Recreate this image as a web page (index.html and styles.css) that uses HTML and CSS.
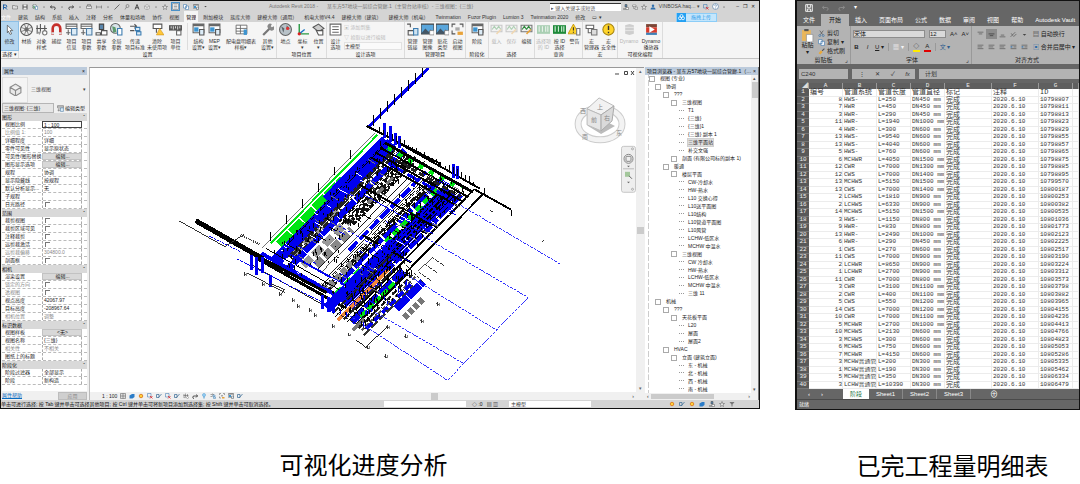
FILE: index.html
```
<!DOCTYPE html>
<html lang="zh-CN">
<head>
    <meta charset="UTF-8">
    <meta name="viewport" content="width=device-width, initial-scale=1.0">
    <title>可视化进度分析</title>
    <link rel="stylesheet" href="styles.css">
</head>
<body>
    <main class="figures">
        <figure class="figure">
            <div class="revit">
                <header class="revit-title">
                    <div class="quick-access" id="quick-access"></div>
                    <span class="doc-title">Autodesk Revit 2018 -</span>
                    <span class="doc-name">某东方57地块一层综合管廊.1（主管台站审核）- 三维视图：{三维}</span>
                    <input class="title-search" type="text" aria-label="搜索" value="▸ 键入关键字或短语">
                    <div class="title-tools" id="title-tools"></div>
                    <span class="window-buttons"><span>–</span><span>❐</span><span>✕</span></span>
                </header>

                <nav class="revit-tabs" id="revit-tabs"></nav>
                <div class="ribbon" id="ribbon"></div>
                <div class="options-bar"></div>

                <div class="workspace">
                    <aside class="properties">
                        <div class="panel-head"><span>属性</span><span>×</span></div>
                        <div class="type-picker">
                            <div class="type-thumb" id="type-thumb"></div>
                            <span>三维视图</span>
                            <span class="caret">▾</span>
                        </div>
                        <div class="type-row">
                            <select aria-label="类型"><option>三维视图: {三维}</option></select>
                            <button class="edit-type" id="edit-type"></button>
                        </div>
                        <div class="prop-grid" id="prop-grid"></div>
                        <div class="prop-foot">
                            <a href="#">属性帮助</a>
                            <button disabled>应用</button>
                        </div>
                    </aside>

                    <section class="view">
                        <div class="view-body">
                            <svg class="model" id="model" viewBox="89 69 547 325" role="img" aria-label="三维管线模型"></svg>
                            <div class="scroll-y"><span>▴</span><i></i><span>▾</span></div>
                        </div>
                        <div class="view-bar">
                            <span class="view-scale">1 : 100</span>
                            <div class="view-icons" id="view-icons"></div>
                            <div class="scroll-x"><i></i><span>›</span></div>
                        </div>
                    </section>

                    <aside class="browser">
                        <div class="panel-head"><span>项目浏览器 - 某东方57地块一层综合管廊.1（…</span><span>×</span></div>
                        <div class="browser-body">
                            <div class="tree" id="tree"></div>
                            <div class="tree-scroll"><span>▴</span><i></i><span class="end">▾</span></div>
                        </div>
                        <div class="tree-hscroll"><span>‹</span><i></i><span>›</span></div>
                    </aside>
                </div>

                <footer class="revit-status">
                    <span class="status-text">单击可进行选择; 按 Tab 键并单击可选择其他项目; 按 Ctrl 键并单击可将新项目添加到选择集; 按 Shift 键并单击可取消选择。</span>
                    <select aria-label="工作集"><option></option></select>
                    <span class="status-mid">◇ :0 &nbsp; ▤ ▥</span>
                    <select aria-label="设计选项"><option>主模型</option></select>
                    <div class="status-icons" id="status-icons"></div>
                </footer>
            </div>
            <figcaption class="caption caption-left">可视化进度分析</figcaption>
        </figure>

        <figure class="figure">
            <div class="excel">
                <header class="excel-title" id="excel-title"></header>
                <nav class="excel-tabs">
                    <button>文件</button>
                    <button class="active">开始</button>
                    <button>插入</button>
                    <button>页面布局</button>
                    <button>公式</button>
                    <button>数据</button>
                    <button>审阅</button>
                    <button>视图</button>
                    <button>帮助</button>
                    <button>Autodesk Vault</button>
                </nav>

                <div class="excel-ribbon">
                    <div class="group group-clip">
                        <div class="group-body">
                            <button class="paste" id="paste"></button>
                            <div class="clip-list" id="clip-list"></div>
                        </div>
                        <div class="group-name">剪贴板<span>⌟</span></div>
                    </div>
                    <div class="group group-font">
                        <div class="font-rows">
                            <div class="font-row">
                                <select class="font-name" aria-label="字体"><option>宋体</option></select>
                                <select class="font-size" aria-label="字号"><option>12</option></select>
                                <button>A˄</button>
                                <button>A˅</button>
                            </div>
                            <div class="font-row">
                                <button><b>B</b></button>
                                <button><i>I</i></button>
                                <button><u>U</u> ▾</button>
                                <span class="rule"></span>
                                <button class="borders">▦ ▾</button>
                                <span class="rule"></span>
                                <button class="fill">◇</button>
                                <button class="ink">A</button>
                                <span class="rule"></span>
                                <button class="phonetic">文 ▾</button>
                            </div>
                        </div>
                        <div class="group-name">字体<span>⌟</span></div>
                    </div>
                    <div class="group group-align">
                        <div class="align-cols">
                            <div class="align-icons" id="align-icons"></div>
                            <div class="align-text">
                                <button>▤ 自动换行</button>
                                <button><em>▣</em> 合并后居中 ▾</button>
                            </div>
                        </div>
                        <div class="group-name">对齐方式</div>
                    </div>
                </div>

                <div class="formula-bar">
                    <select class="name-box" aria-label="名称框"><option>C240</option></select>
                    <div class="formula-tools"><span>⋮</span><span>✕</span><span>✓</span><i>fx</i></div>
                    <input type="text" aria-label="编辑栏" value="计划">
                </div>

                <table class="sheet">
                    <colgroup>
                        <col class="col-head"><col class="col-s"><col class="col-s"><col class="col-s"><col class="col-s">
                        <col class="col-l"><col class="col-l"><col class="col-s"><col>
                    </colgroup>
                    <thead>
                        <tr><th class="corner">◢</th><th>A</th><th>B</th><th>C</th><th>D</th><th>E</th><th>F</th><th>G</th><th></th></tr>
                    </thead>
                    <tbody id="sheet-rows"></tbody>
                </table>

                <div class="sheet-tabs">
                    <span class="arrow">‹</span><span class="arrow">›</span>
                    <button class="active">阶段</button>
                    <button>Sheet1</button>
                    <button>Sheet2</button>
                    <button>Sheet3</button>
                    <button class="add">⊕</button>
                </div>
                <footer class="excel-status">就绪</footer>
            </div>
            <figcaption class="caption caption-right">已完工程量明细表</figcaption>
        </figure>
    </main>
    <script src="script.js"></script>
</body>
</html>
```

FILE: styles.css
```
:root {
    --ui: "Liberation Sans", "Noto Sans CJK SC", sans-serif;
    --mono: "Liberation Mono", "Noto Sans CJK SC", monospace;
    --chrome: #d4d4d4;
    --panel: #f0f0f0;
    --ribbon: #f5f5f5;
    --head: #bccbdc;
    --dark: #666666;
    --xl: #b3b3b3;
}

* {
    margin: 0;
    padding: 0;
    box-sizing: border-box;
}

body {
    background: #fff;
    font-family: var(--ui);
    font-size: 5px;
    line-height: 7px;
    color: #222;
    overflow-x: hidden;
}

button,
input,
select {
    font: inherit;
    color: inherit;
    background: none;
    border: none;
    border-radius: 0;
    appearance: none;
    white-space: nowrap;
}

svg {
    display: block;
}

.figures {
    display: grid;
    grid-template-columns: 760fr 285fr;
    column-gap: 35px;
    align-items: start;
}

.figure {
    min-width: 0;
}

.caption {
    margin-top: 37px;
    font-family: "Noto Sans CJK SC", sans-serif;
    font-size: 24px;
    line-height: 36px;
    text-align: center;
    color: #000;
    white-space: nowrap;
}

.caption-left {
    padding-right: 33px;
}

.caption-right {
    padding-left: 30px;
}

/* ---------- Revit window ---------- */

.revit {
    border: 1px solid #111;
    background: var(--panel);
    overflow: hidden;
}

.revit-title {
    display: flex;
    align-items: center;
    height: 11px;
    background: var(--chrome);
    white-space: nowrap;
}

.quick-access {
    display: flex;
    align-items: center;
    gap: 4px;
    width: 268px;
    padding-left: 1px;
}

.quick-access .boxed {
    background: #c5e0f5;
    outline: 1px solid #4a90c8;
}

.doc-title {
    width: 58px;
    color: #777;
}

.doc-name {
    flex: 1;
    color: #777;
    overflow: hidden;
}

.title-search {
    width: 71px;
    height: 8px;
    padding: 0 1px;
    background: #fff;
    border-top: 1px solid #333;
    color: #555;
}

.title-tools {
    display: flex;
    align-items: center;
    gap: 3px;
    padding-left: 2px;
    color: #444;
}

.window-buttons {
    display: flex;
    gap: 4px;
    padding: 0 4px 0 10px;
    color: #222;
}

.revit-tabs {
    display: flex;
    align-items: center;
    gap: 7px;
    height: 10px;
    background: var(--chrome);
}

.revit-tabs button {
    height: 9px;
    color: #333;
}

.revit-tabs .file {
    color: #fff;
}

.revit-tabs .active {
    background: var(--ribbon);
    outline: 2px solid var(--ribbon);
    color: #000;
}

.revit-tabs .cloud {
    display: flex;
    align-items: center;
    margin: 0 42px 0 auto;
    background: #c4e6fc;
    border: 1px solid #8ccdf7;
    color: #2f9bea;
    padding-right: 5px;
    gap: 5px;
}

.ribbon {
    display: flex;
    height: 37px;
    background: var(--ribbon);
    border-bottom: 1px solid #c4c4c4;
    line-height: 6px;
}

.ribbon-panel {
    display: flex;
    flex-direction: column;
    justify-content: space-between;
    border-right: 1px solid #dcdcdc;
}

.ribbon-panel .tools {
    display: flex;
}

.panel-name {
    text-align: center;
    line-height: 9px;
}

.tool {
    display: flex;
    flex-direction: column;
    align-items: center;
    width: 15px;
    height: 28px;
    padding-top: 1px;
    line-height: 6px;
    color: #333;
}

.tool svg {
    flex: none;
    margin-bottom: 2px;
}

.tool span {
    display: block;
}

.tool.mid {
    width: 17px;
}

.tool.wide {
    width: 22px;
}

.tool.extra {
    width: 36px;
}

.tool.on {
    background: #b6d7f0;
    outline: 1px solid #8cbfe6;
}

.tool.off {
    opacity: 0.35;
}

.tool-sep {
    width: 1px;
    margin: 1px 3px 0 4px;
    background: #dcdcdc;
}

.option-list {
    width: 60px;
    line-height: 10px;
    color: #bbb;
}

.option-list select {
    display: block;
    width: 58px;
    height: 8px;
    line-height: 7px;
    color: #333;
    background: #fafafa;
    border: 1px solid #e2e2e2;
}

.options-bar {
    height: 8px;
    background: #f2f2f2;
}

.workspace {
    display: flex;
}

.panel-head {
    display: flex;
    justify-content: space-between;
    height: 8px;
    padding: 0 2px;
    background: var(--head);
    line-height: 8px;
    white-space: nowrap;
    overflow: hidden;
    color: #111;
}

/* properties palette */

.properties {
    flex: 0 0 86px;
    display: flex;
    flex-direction: column;
    margin-right: 2px;
    padding-left: 1px;
    min-width: 0;
}

.type-picker {
    display: flex;
    align-items: center;
    gap: 3px;
    height: 28px;
    padding-top: 1px;
    color: #444;
}

.type-thumb {
    display: grid;
    place-items: center;
    width: 26px;
    height: 26px;
    border: 1px solid #ddd;
    background: #f4f4f4;
}

.type-picker .caret {
    margin: 0 1px 0 auto;
}

.type-row {
    display: flex;
    gap: 3px;
    height: 10px;
}

.type-row select {
    width: 52px;
    border: 1px solid #b5b5b5;
    background: #e6e6e6;
    padding-left: 1px;
}

.edit-type {
    display: flex;
    align-items: center;
    gap: 1px;
}

.prop-grid {
    flex: 1;
    background: #fff;
    white-space: nowrap;
}

.prop-group {
    display: flex;
    justify-content: space-between;
    align-items: center;
    height: 8px;
    padding-right: 2px;
    background: #d9d9d9;
}

.prop {
    display: grid;
    grid-template-columns: 38px 40px 1fr;
    grid-template-rows: 7px;
    height: 8px;
    padding-left: 2px;
    border-bottom: 1px dashed #bbb;
}

.prop > * {
    overflow: hidden;
    padding-left: 1px;
    min-width: 0;
    text-align: left;
}

.prop > :nth-child(2) {
    border-left: 1px dashed #aaa;
    border-right: 1px dashed #aaa;
}

.prop.grey {
    color: #888;
}

.prop > button:nth-child(2) {
    background: #d8d8d8;
    border: 1px solid #c2c2c2;
    text-align: center;
    line-height: 5px;
}

.prop > input:nth-child(2) {
    height: 7px;
    border: 1px solid #444;
    line-height: 5px;
}

.prop input[type="checkbox"] {
    display: block;
    width: 5px;
    height: 5px;
    margin: 1px;
    border: solid #777;
    border-width: 1px 0 0 1px;
}

.prop-foot {
    display: flex;
    justify-content: space-between;
    align-items: center;
    height: 9px;
    background: var(--panel);
}

.prop-foot a {
    color: #0a6cc0;
}

.prop-foot button {
    width: 29px;
    height: 8px;
    background: #cfcfcf;
    border: 1px solid #bdbdbd;
    color: #888;
}

/* drawing area */

.view {
    flex: 1;
    min-width: 0;
    border-top: 1px solid #999;
    border-left: 1px solid #bbb;
}

.view-body {
    display: flex;
    background: #fff;
}

.model {
    flex: 1;
    min-width: 0;
    height: auto;
}

.model text {
    font-family: var(--ui);
}

.scroll-y {
    display: flex;
    flex-direction: column;
    justify-content: space-between;
    align-items: center;
    width: 8px;
    background: var(--panel);
    color: #666;
}

.scroll-y i,
.scroll-x i {
    width: 7px;
    height: 7px;
    background: #cbcbcb;
}

.view-bar {
    display: flex;
    align-items: center;
    height: 8px;
    background: var(--panel);
}

.view-scale {
    width: 30px;
    padding-left: 12px;
    white-space: nowrap;
}

.view-icons {
    display: flex;
    gap: 3px;
}

.scroll-x {
    flex: 1;
    display: flex;
    align-items: center;
    justify-content: space-between;
    padding: 0 10px 0 188px;
}

/* project browser */

.browser {
    flex: 0 0 115px;
    display: flex;
    flex-direction: column;
    min-width: 0;
    padding-left: 1px;
    border-right: 1px solid #777;
}

.browser-body {
    flex: 1;
    display: flex;
    background: #fff;
}

.tree {
    flex: 1;
    display: grid;
    grid-auto-rows: 1fr;
    padding-left: 3px;
    min-width: 0;
    white-space: nowrap;
    overflow: hidden;
}

.node {
    display: flex;
    align-items: center;
    border-left: 1px dashed #ccc;
    line-height: 7px;
}

.node-1 { padding-left: 6px; }
.node-2 { padding-left: 14px; }
.node-3 { padding-left: 22px; }
.node-4 { padding-left: 30px; }

.node::before {
    content: "";
    width: 4px;
    height: 4px;
    margin-right: 5px;
    border: 1px solid #aaa;
}

.node-4::before {
    height: 1px;
    width: 5px;
    margin-right: 4px;
    border: 0;
    border-top: 1px dotted #999;
}

.node.selected span {
    background: #dedede;
    outline: 1px solid #d0d0d0;
}

.tree-scroll {
    display: flex;
    flex-direction: column;
    align-items: center;
    width: 7px;
    background: var(--panel);
    color: #555;
}

.tree-scroll i {
    width: 6px;
    height: 16px;
    background: #cbcbcb;
}

.tree-scroll .end {
    margin-top: auto;
}

.tree-hscroll {
    display: flex;
    height: 7px;
    align-items: center;
    gap: 2px;
    padding: 0 8px 0 2px;
}

.tree-hscroll i {
    width: 63px;
    height: 5px;
    background: #cbcbcb;
}

.tree-hscroll span:last-child {
    margin-left: auto;
}

.revit-status {
    display: flex;
    align-items: center;
    height: 8px;
    background: var(--chrome);
    white-space: nowrap;
    overflow: hidden;
    line-height: 6px;
    color: #111;
}

.status-text {
    width: 383px;
}

.revit-status select {
    width: 82px;
    height: 6px;
    background: #fff;
    line-height: 6px;
    color: #333;
    padding-left: 2px;
}

.status-mid {
    width: 43px;
    padding-left: 6px;
}

.status-icons {
    display: flex;
    gap: 4px;
    margin: 0 24px 0 auto;
}

/* ---------- Excel window ---------- */

.excel {
    border: 1px solid #111;
    border-left-width: 2px;
    background: var(--dark);
    color: #fff;
    font-size: 6px;
    overflow: hidden;
}

.excel-title {
    display: flex;
    align-items: center;
    gap: 9px;
    height: 13px;
    padding-left: 8px;
    color: #8f8f8f;
}

.excel-title span {
    color: #fff;
}

.excel-tabs {
    display: flex;
    height: 12px;
}

.excel-tabs button {
    padding: 0 6px;
    height: 12px;
}

.excel-tabs .active {
    background: var(--xl);
    color: #111;
    padding: 0 8px;
}

.excel-ribbon {
    display: flex;
    height: 38px;
    background: var(--xl);
    color: #222;
    overflow: hidden;
}

.group {
    display: flex;
    flex-direction: column;
    justify-content: space-between;
    border-right: 1px solid #999;
    padding-top: 3px;
}

.group-clip {
    width: 54px;
}

.group-font {
    width: 121px;
    padding-left: 2px;
}

.group-align {
    flex: 1;
    border: none;
    padding-left: 3px;
}

.group-body {
    display: flex;
    gap: 4px;
    padding-left: 4px;
}

.group-name {
    position: relative;
    text-align: center;
    line-height: 8px;
}

.group-name span {
    position: absolute;
    right: 2px;
}

.paste {
    display: flex;
    flex-direction: column;
    align-items: center;
}

.clip-list button {
    display: flex;
    align-items: center;
    gap: 2px;
    height: 9px;
}

.font-rows {
    display: grid;
    gap: 3px;
}

.font-row {
    display: flex;
    align-items: center;
    gap: 4px;
    height: 10px;
}

.font-row select {
    height: 8px;
    background: #dadada;
    border: 1px solid #8d8d8d;
    line-height: 6px;
}

.font-row .font-name {
    width: 72px;
}

.font-row .font-size {
    width: 17px;
}

.font-row .rule {
    width: 1px;
    height: 8px;
    background: #999;
}

.font-row + .font-row button {
    min-width: 7px;
}

.font-row .borders {
    color: #f5f5f5;
}

.font-row .fill {
    border-bottom: 2px solid #ffeb00;
}

.font-row .ink {
    border-bottom: 2px solid #e00000;
}

.font-row .phonetic {
    color: #2c5b8e;
}

.align-cols {
    display: flex;
    gap: 3px;
}

.align-icons {
    display: grid;
    grid-template-columns: repeat(5, 11px);
    row-gap: 3px;
}

.align-icons button {
    display: grid;
    place-items: center;
    height: 10px;
}

.align-icons .on {
    background: #8c8c8c;
}

.align-text {
    display: grid;
    gap: 3px;
    line-height: 10px;
}

.align-text button {
    text-align: left;
}

.align-text em {
    color: #2c6ca8;
    font-style: normal;
}

.formula-bar {
    display: flex;
    gap: 4px;
    height: 19px;
    padding: 5px 0 4px 2px;
    color: #333;
}

.formula-bar select,
.formula-bar input,
.formula-tools {
    background: var(--xl);
    height: 10px;
    min-width: 0;
    padding-left: 2px;
    line-height: 10px;
}

.formula-bar .name-box {
    width: 49px;
}

.formula-tools {
    display: flex;
    justify-content: space-around;
    width: 63px;
}

.formula-bar input {
    flex: 1;
    padding-left: 6px;
}

.sheet {
    width: 100%;
    height: 306px;
    table-layout: fixed;
    border-collapse: separate;
    border-spacing: 0;
    background: #fff;
    color: #333;
    font-family: var(--mono);
    font-size: 6px;
    line-height: 6px;
}

.col-head { width: 12px; }
.col-s { width: 34px; }
.col-l { width: 47px; }

.sheet th {
    background: #5f5f5f;
    color: #eee;
    font-weight: normal;
    border-right: 1px solid #999;
}

.sheet tbody th {
    background: #595959;
    border: none;
    border-bottom: 1px solid #777;
}

.sheet .corner {
    color: #ddd;
    text-align: right;
}

.sheet td {
    padding-left: 1px;
    white-space: nowrap;
    vertical-align: middle;
    border-right: 1px solid #ececec;
    border-bottom: 1px solid #ececec;
}

.sheet td.clip {
    overflow: hidden;
}

.sheet td.num {
    text-align: right;
}

.sheet .zh {
    font-size: 7px;
}

.sheet-tabs {
    display: flex;
    height: 11px;
    border-bottom: 1px solid #4a4a4a;
}

.sheet-tabs .arrow {
    width: 13px;
    text-align: right;
    line-height: 10px;
}

.sheet-tabs button {
    height: 10px;
    padding: 0 7px;
    border-right: 1px solid #888;
}

.sheet-tabs .active {
    margin-left: 20px;
    background: #fff;
    color: #217346;
    border: none;
}

.sheet-tabs .add {
    margin-left: 12px;
    border: none;
    font-size: 8px;
}

.excel-status {
    height: 9px;
    padding-left: 2px;
    font-size: 5px;
    line-height: 8px;
}
```

FILE: script.js
```
const byId = (id) => document.getElementById(id);

// 12x12 icon shapes
const shapes = {
    arrow: '<path d="M4 2l5 5H6.500l1.500 3-1.500.5L5 7.500 4 9z" fill="#fff" stroke="#555" stroke-width=".7"/>',
    ball: '<circle cx="6" cy="6" r="5.500" fill="#eee" stroke="#555"/><circle cx="6" cy="6" r="2" fill="#777"/><path d="M1 4l10 4M4 1l4 10M8 1L4 11M11 4L1 8" stroke="#666" stroke-width=".7"/>',
    styles: '<path d="M2 2v8M5 1v7M9 2v6M1 5h10" stroke="#555" fill="none"/><circle cx="9" cy="9" r="2" fill="#fff" stroke="#777"/><path d="M2 8l2 3 2-3" fill="#999"/>',
    magnet: '<path d="M2.500 11V5a3.500 3.500 0 017 0v6" fill="none" stroke="#c62f2b" stroke-width="2.400"/><path d="M1.300 9.500h2.400M8.300 9.500h2.400" stroke="#ddd" stroke-width="2"/>',
    sheet: '<path d="M1 1h10v4H1zM1 3h10" fill="#fff" stroke="#666"/><path d="M6 5h5v6H6z" fill="#dcecf7" stroke="#4b7ca5"/><path d="M3 6v5M1 9h4" stroke="#666"/>',
    share: '<path d="M4 1h4v5H4z" fill="#5b87ad" stroke="#444"/><path d="M1 9h4v2H1zM6 7h5v4H6z" fill="#fff" stroke="#555"/>',
    globe: '<circle cx="5" cy="5" r="4.500" fill="#d9e4ea" stroke="#666"/><path d="M2 3l3 1 1 4-3 1z" fill="#5d9a6c"/><path d="M7 5h4v6H7z" fill="#fff" stroke="#3c7cb0"/>',
    transfer: '<path d="M1 3h6M5 1l2 2-2 2M1 7h4" stroke="#555" fill="none"/><path d="M6 4h4v3H6zM7 8h4v3H7z" fill="#dcecf7" stroke="#3c7cb0"/>',
    purge: '<path d="M2 1h8v4H2zM5 5v4" fill="#fff" stroke="#555"/><path d="M8 5l4 6H5z" fill="#ffc83a" stroke="#c98a0c" stroke-width=".5"/>',
    units: '<path d="M0 2h12v5H0z" fill="#555"/><path d="M2 3v2M4 3v3M6 3v2M8 3v3M10 3v2" stroke="#fff" stroke-width=".7"/><path d="M7 7h4v4H7z" fill="#fff" stroke="#666"/>',
    window: '<path d="M1 1h10v8H1z" fill="#fff" stroke="#666"/><path d="M1 1h10v2H1z" fill="#666"/><path d="M2 4h4v4H2z" fill="#3d94d0"/><path d="M7 6h4v5H7z" fill="#dcecf7" stroke="#555"/>',
    grid: '<path d="M1 2h10v8H1zM1 5h10M1 7.500h10M5 2v8" fill="#fff" stroke="#666" stroke-width=".8"/><path d="M8 6h3v5H8z" fill="#3d94d0"/>',
    wrench: '<path d="M2 11l6-6" stroke="#777" stroke-width="2"/><path d="M7 5a2.500 2.500 0 013-4L9 3l1 1 2-1a2.500 2.500 0 01-4 3z" fill="#888"/>',
    place: '<circle cx="6" cy="6" r="5.500" fill="#b8c2c8" stroke="#666"/><path d="M2 3l3 2-1 4zM7 2l3 3-3 1z" fill="#5e666b"/><circle cx="8" cy="5" r="1.500" fill="#d33"/>',
    coord: '<path d="M3 1v9h9" fill="none" stroke="#2a9a44" stroke-width="1.300"/><path d="M3 10l5-4" stroke="#1a75c4" stroke-width="1.300"/><circle cx="3" cy="10" r="1.500" fill="#d22"/>',
    position: '<path d="M1 4l5-3 5 4-5 3z" fill="#ccc" stroke="#555"/><path d="M4 7h6v4H6z" fill="#fff" stroke="#555"/>',
    list: '<path d="M1 1h10v10H1zM3 3.500h6M3 6h6M3 8.500h6" fill="#fff" stroke="#666"/>',
    link: '<path d="M1 1h3v3M2 7h5v4H2z" fill="none" stroke="#555"/><path d="M7 5h4v6H7z" fill="#cfe3f1" stroke="#3c7cb0"/>',
    image: '<path d="M0 1h12v9H0z" fill="#5aa6dc" stroke="#444"/><path d="M0 10l4-5 3 3 2-2 3 4z" fill="#435564"/><path d="M8 7h4v4H8z" fill="#fff" stroke="#777" stroke-width=".6"/>',
    startup: '<path d="M1 4V1h3M8 1h3v3M1 7v3h3" fill="none" stroke="#555"/><path d="M4 4h4v3H4z" fill="#aaa"/><path d="M6 8h5v3H6z" fill="#e8a33a"/>',
    edit: '<path d="M1 2h10v6H1z" fill="#eee" stroke="#777"/><path d="M2 6l2-3 2 3M6 6l2-3 2 3" fill="none" stroke="#2a8a3a"/><path d="M6 10l4-4" stroke="#e8a33a" stroke-width="1.500"/>',
    bars: '<path d="M0 2h12v8H0z" fill="#1e8a3a"/><path d="M2 3v5M5 3v5M8 3v5M10 3v5" stroke="#d7f0dc"/>',
    warn: '<path d="M5 1l5 9H0z" fill="#ffd42a" stroke="#b98c00" stroke-width=".7"/><path d="M5 4v3M5 8v1" stroke="#333"/><path d="M8 5h3v6H8z" fill="#fff" stroke="#777"/>',
    macro: '<path d="M1 2h7v3H1zM3 5v4h3" fill="#fff" stroke="#666"/><path d="M6 6h5v5H6z" fill="#ddd" stroke="#777"/>',
    alert: '<circle cx="6" cy="6" r="5.200" fill="#ffd42a" stroke="#a88714"/><path d="M6 2.500v4M6 8v1.500" stroke="#333" stroke-width="1.300"/>',
    dynamo: '<path d="M2 2l4-1 4 1v8l-4 1-4-1z" fill="#888"/><path d="M2 4h8M2 7h8" stroke="#eee" stroke-width=".6"/>',
    player: '<path d="M1 1h10v3H1z" fill="#7b4636"/><path d="M1 4h10v5H1z" fill="#d93b2b"/><path d="M1 9h10v2H1z" fill="#3f7fb5"/><path d="M4 3l5 3-5 3z" fill="#fff"/>',
    logo: '<path d="M3 1v10M3 2h4a2.500 2.500 0 010 5H3M6 7l4 4" fill="none" stroke="#1d5fa5" stroke-width="2"/>',
    folder: '<path d="M1 3h4l1 1h5v6H1z" fill="#ddd" stroke="#555"/>',
    save: '<path d="M1 1h10v10H1z" fill="#555"/><path d="M3 1h6v4H3zM3 7h6v4H3z" fill="#eee"/>',
    disk: '<path d="M1 1h10v10H1zM3.500 1v4h5V1M3.500 11V7.500h5V11" fill="none" stroke="#fff" stroke-width="1.300"/>',
    undo: '<path d="M3 3L1 6l3 3M1 6h7a2 2 0 010 5" fill="none" stroke="currentColor" stroke-width="1.500"/>',
    redo: '<path d="M9 3l2 3-3 3M11 6H4a2 2 0 000 5" fill="none" stroke="currentColor" stroke-width="1.500"/>',
    print: '<path d="M3 1h6v3H3zM1 4h10v5H1z" fill="#eee" stroke="#555"/>',
    dim: '<path d="M1 3v6M11 3v6M1 6h10" stroke="#555"/>',
    pen: '<path d="M1 11L11 1" stroke="#444" stroke-width="1.500"/>',
    tag: '<circle cx="7" cy="4" r="3" fill="none" stroke="#555"/><path d="M2 11l3-5" stroke="#555"/>',
    letter: '<path d="M2 11L6 1l4 10M3.500 7.500h5" fill="none" stroke="#222" stroke-width="1.500"/>',
    cube: '<path d="M1 4l5-3 5 3v5l-5 3-5-3zM1 4l5 3 5-3M6 7v5" fill="#e8e8e8" stroke="#8a8a8a"/>',
    caret: '<path d="M3 5h6L6 8z" fill="#444"/>',
    person: '<circle cx="6" cy="3.500" r="2.500" fill="#2f6fad"/><path d="M1 11c0-6 10-6 10 0z" fill="#2f6fad"/>',
    help: '<circle cx="6" cy="6" r="5" fill="#fff" stroke="#3c6c9c"/><path d="M4.500 4.500c0-2 3-2 3 0S6 6 6 7.500M6 8.500v1" fill="none" stroke="#3c6c9c"/>',
    star: '<path d="M6 1l1.500 4H11L8 7.500 9 11 6 9l-3 2 1-3.500L1 5h3.500z" fill="#eee" stroke="#555"/>',
    cloud: '<path d="M0 0h12v12H0z" fill="#24a0f2"/><circle cx="4" cy="7" r="2" fill="none" stroke="#fff"/><circle cx="8" cy="7" r="2" fill="none" stroke="#fff"/><circle cx="6" cy="4" r="2" fill="none" stroke="#fff"/>',
    clip: '<path d="M1 1h8v10H1z" fill="#eab659"/><path d="M3 0h4v2H3z" fill="#555"/><path d="M5 5h6v7H5z" fill="#fff" stroke="#888" stroke-width=".6"/>',
    cut: '<path d="M3 1l5 7M9 1L4 8" stroke="#444"/><circle cx="3" cy="9.500" r="1.700" fill="none" stroke="#2c6ca8"/><circle cx="9" cy="9.500" r="1.700" fill="none" stroke="#2c6ca8"/>',
    copy: '<path d="M1 1h6v7H1zM5 4h6v7H5z" fill="#fff" stroke="#2c6ca8"/>',
    brush: '<path d="M11 1L7 5" stroke="#555" stroke-width="2"/><path d="M5 4l3 3-4 4-3-2z" fill="#e9a83a"/>',
    top: '<path d="M1 2h10M3 5h6" stroke="#444"/>',
    middle: '<path d="M1 5h10M3 8h6" stroke="#222"/>',
    bottom: '<path d="M3 7h6M1 10h10" stroke="#444"/>',
    lines: '<path d="M1 2h10M1 5h8M1 8h10" stroke="#444"/>',
    rotate: '<path d="M1 10L9 2M6 10l5-5M2 4l3 4" stroke="#444"/>',
    indent: '<path d="M1 2h10M6 5h5M1 8h10" stroke="#444"/><path d="M1 5h3" stroke="#2c6ca8" stroke-width="2"/>',
    square: '<path d="M1 1h10v10H1zM1 6h10M6 1v10" fill="#ddd" stroke="#555"/>',
    blue: '<path d="M1 5l5-3h5v6l-4 3H1z" fill="#2b7cc8"/>',
    sun: '<circle cx="6" cy="6" r="3.500" fill="#ffd23a" stroke="#e0852a" stroke-width="2"/>',
    cross: '<path d="M1 1h7v7H1z" fill="none" stroke="#2f6fad"/><path d="M6 6l5 5M11 6l-5 5" stroke="#d22" stroke-width="1.500"/>',
    hatch: '<path d="M1 3h5v6H1zM5 9l6-7" fill="none" stroke="#3f6f98" stroke-width="1.500"/>',
    bulb: '<circle cx="6" cy="4" r="3" fill="#9fd2f5" stroke="#3d94d0"/><path d="M6 7v4" stroke="#3d94d0" stroke-width="2"/>',
    filter: '<path d="M1 2h10L7 7v4H5V7z" fill="#777"/>'
};

function icon(name, size = 12) {
    return `<svg width="${size}" height="${size}" viewBox="0 0 12 12" fill="none">${shapes[name]}</svg>`;
}

const iconRow = (names, size) => names.map((n) => icon(n, size)).join('');

// ---------- Revit chrome ----------

byId('quick-access').innerHTML =
    ['logo', 'folder', 'save', 'globe', 'caret', 'undo', 'caret', 'redo', 'caret', 'print', 'dim', 'caret', 'pen', 'tag', 'letter', 'cube', 'caret', 'star']
        .map((n) => icon(n, n === 'caret' ? 4 : 6)).join('') +
    '<span class="boxed">' + icon('list', 7) + '</span>' + iconRow(['copy', 'window'], 6) + icon('caret', 5);

byId('title-tools').innerHTML = iconRow(['share', 'macro', 'star', 'person'], 6) +
    '<span>VINBOSA.haq… ▾</span>' + icon('cross', 6) + icon('help', 7) + icon('caret', 4);

const tabs = ['文件', '建筑', '结构', '系统', '插入', '注释', '分析', '体量和场地', '协作', '视图', '管理', '附加模块', '族库大师',
    '建模大师（通用）', '机电大师V4.4', '建模大师（建筑）', '建模大师（机电）', 'Twinmation', 'Fuzor Plugin', 'Lumion 3',
    'Twinmation 2020', '修改', '▭ ▾'];
const tabClass = { '文件': 'file', '管理': 'active' };
byId('revit-tabs').innerHTML = tabs.map((t) => `<button class="${tabClass[t] || ''}">${t}</button>`).join('') +
    `<button class="cloud">${icon('cloud', 9)}拖拽上传</button>`;

// [icon, first line, second line, classes]
const ribbon = [
    { name: '选择 ▾', tools: [['arrow', '修改', '', 'mid on']] },
    { name: '设置', tools: [
        ['ball', '材质', ''], ['styles', '对象', '样式'], ['magnet', '捕捉', ''], ['sheet', '项目', '信息'],
        ['sheet', '项目', '参数'], ['share', '共享', '参数'], ['globe', '全局', '参数'], ['transfer', '传递', '项目标准', 'wide'],
        ['purge', '清除', '未使用项', 'wide'], ['units', '项目', '单位'], null,
        ['window', '结构', '设置▾'], ['window', 'MEP', '设置▾', 'mid'], ['grid', '配电盘明细表', '样板▾', 'extra'], ['wrench', '其他', '设置▾', 'mid']] },
    { name: '项目位置', tools: [['place', '地点', '', 'mid'], ['coord', '坐标', '▾', 'mid'], ['position', '位置', '▾']] },
    { name: '设计选项', tools: [['list', '设计', '选项', 'mid'], 'options'] },
    { name: '管理项目', tools: [['link', '管理', '链接'], ['image', '管理', '图像'], ['image', '贴花', '类型'], ['startup', '启动', '视图']] },
    { name: '阶段化', tools: [['window', '阶段', '', 'wide']] },
    { name: '选择', tools: [['edit', '载入', '', 'off'], ['edit', '保存', '', 'off'], ['edit', '编辑', '']] },
    { name: '查询', tools: [['bars', '选择项', '的 ID', 'mid off'], ['bars', '按 ID', '选择'], ['warn', '警告', '']] },
    { name: '宏', tools: [['macro', '宏', '管理器', 'mid'], ['alert', '宏', '安全性', 'mid']] },
    { name: '可视化编程', tools: [['dynamo', 'Dynamo', '', 'wide off'], ['player', 'Dynamo', '播放器', 'wide']] }
];

const optionList = '<div class="option-list"><div>▣ 添加到集</div><div>▽ 拾取以进行编辑</div><select aria-label="设计选项"><option>主模型</option></select></div>';

function toolHtml(t) {
    if (t === null) return '<span class="tool-sep"></span>';
    if (t === 'options') return optionList;
    return `<button class="tool ${t[3] || ''}">${icon(t[0], 13)}<span>${t[1]}</span><span>${t[2]}</span></button>`;
}

byId('ribbon').innerHTML = ribbon.map((p) =>
    `<div class="ribbon-panel"><div class="tools">${p.tools.map(toolHtml).join('')}</div><div class="panel-name">${p.name}</div></div>`).join('');

byId('type-thumb').innerHTML = icon('cube', 13);
byId('edit-type').innerHTML = icon('sheet', 7) + '编辑类型';
byId('view-icons').innerHTML = iconRow(['square', 'blue', 'sun', 'cross', 'hatch', 'cross', 'hatch', 'styles', 'redo', 'bulb', 'transfer', 'startup', 'window', 'hatch'], 6);
byId('status-icons').innerHTML = iconRow(['sun', 'hatch', 'sun', 'blue', 'share', 'star', 'filter'], 6);

// [label, value, kind]
const props = [
    ['图形'],
    ['视图比例', '1 : 100', 'text'], ['比例值 1:', '100', 'grey'], ['详细程度', '详细'], ['零件可见性', '显示原状态'],
    ['可见性/图形替换', '编辑...', 'button'], ['图形显示选项', '编辑...', 'button'], ['规程', '协调'], ['显示隐藏线', '按规程'],
    ['默认分析显示...', '无'], ['子规程', ''], ['日光路径', '', 'check'],
    ['范围'],
    ['裁剪视图', '', 'check'], ['裁剪区域可见', '', 'check'], ['注释裁剪', '', 'check'], ['远剪裁激活', '', 'check'],
    ['远剪裁偏移', '304800.0', 'grey'], ['剖面框', '', 'check'],
    ['相机'],
    ['渲染设置', '编辑...', 'button'], ['锁定的方向', '', 'check grey'], ['透视图', '', 'check grey'], ['视点高度', '42067.97'],
    ['目标高度', '-208967.64'], ['相机位置', '调整', 'grey'],
    ['标识数据'],
    ['视图样板', '<无>', 'button'], ['视图名称', '{三维}'], ['相关性', '不相关', 'grey'], ['图纸上的标题', ''],
    ['阶段化'],
    ['阶段过滤器', '全部显示'], ['阶段', '新构造']
];

byId('prop-grid').innerHTML = props.map(([label, value, kind = '']) => {
    if (value === undefined) return `<div class="prop-group"><span>${label}</span><span>ˆ</span></div>`;
    const text = value.replace('<', '&lt;');
    let cell = `<span>${text}</span>`;
    if (kind === 'button') cell = `<button aria-label="${label}">${text}</button>`;
    if (kind === 'text') cell = `<input type="text" aria-label="${label}" value="${text}">`;
    if (kind.startsWith('check')) cell = `<span><input type="checkbox" aria-label="${label}"></span>`;
    return `<div class="prop ${kind.includes('grey') ? 'grey' : ''}"><span>${label}</span>${cell}</div>`;
}).join('');

// [depth, label]
const tree = [
    [0, '视图 (专业)'], [1, '协调'], [2, '???'], [3, '三维视图'], [4, 'T1'], [4, '{三维}'], [4, '{三维}1'], [4, '{三维} 副本 1'],
    [4, '三维平面站'], [4, '补交文强'], [3, '剖面 (有限公司标的副本 1)'], [2, '暖通'], [3, '楼层平面'], [4, 'CW-冷却水'], [4, 'HW-热水'],
    [4, 'L10 交换心得'], [4, 'L10送平面图'], [4, 'L10结构'], [4, 'L10管道平面图'], [4, 'L10风管'], [4, 'LCHW-低区水'], [4, 'MCHW 中温水'],
    [3, '三维视图'], [4, 'CW 冷却水'], [4, 'HW-热水'], [4, 'LCHW-低区水'], [4, 'MCHW 中温水'], [4, '三维 11'],
    [1, '机械'], [2, '???'], [3, '天花板平面'], [4, 'L20'], [4, '屋面'], [4, '屋面2'], [2, 'HVAC'], [3, '立面 (建筑立面)'],
    [4, '东 - 机械'], [4, '北 - 机械'], [4, '西 - 机械'], [4, '南 - 机械']
];
byId('tree').innerHTML = tree.map(([d, label]) =>
    `<div class="node node-${d}${label === '三维平面站' ? ' selected' : ''}"><span>${label}</span></div>`).join('');

// ---------- Pipe model ----------

let seed = 7;
function rnd() {
    seed = (seed * 16807) % 2147483647;
    return seed / 2147483647;
}

const BLUE = '#0000f0';
const GREEN = '#00e613';
const out = [];

function line(x1, y1, x2, y2, color, width = 1, dash = '') {
    out.push(`<path d="M${x1.toFixed(1)} ${y1.toFixed(1)}L${x2.toFixed(1)} ${y2.toFixed(1)}" stroke="${color}" stroke-width="${width}"${dash ? ` stroke-dasharray="${dash}"` : ''}/>`);
}

// a runs west to north, b runs north-west to south-east
const pt = (a, b) => [258 + 119 * a + 98 * b, 257 - 121 * a + 55 * b];
const run = (a1, a2, b, color, w, dash) => line(...pt(a1, b), ...pt(a2, b), color, w, dash);
const rack = (a, b1, b2, color, w, dash) => line(...pt(a, b1), ...pt(a, b2), color, w, dash);

// a band of thin, broken pipes side by side
function bundle(a1, a2, b1, b2, count, color) {
    for (let i = 0; i < count; i++) {
        const dash = [3 + rnd() * 12, 1 + rnd() * 2, 1 + rnd() * 5, 1 + rnd() * 3].map(Math.round).join(' ');
        run(a1 + rnd() * 0.05, a2 - rnd() * 0.05, b1 + (b2 - b1) * i / count, color, 1 + Math.round(rnd()), dash);
    }
}

// long runs, north-west side first
run(0.05, 1, -0.03, '#777', 1);
run(0.1, 1, 0, GREEN, 2);
run(0.12, 0.66, 0.06, GREEN, 8, '16 1');
run(0.02, 1, 0.15, BLUE, 12);
run(0.5, 1, 0.08, BLUE, 9);
bundle(0.1, 1, 0.1, 0.13, 2, '#000');
run(0.1, 0.5, 0.23, '#999', 6, '13 4');
bundle(0.05, 1, 0.2, 0.26, 4, '#222');
run(0.02, 1, 0.28, BLUE, 6, '23 1');
run(0.08, 0.45, 0.36, '#999', 8, '11 4');
bundle(0.4, 1, 0.31, 0.44, 8, '#111');
run(0.6, 0.95, 0.38, '#777', 3, '9 5');
run(0.12, 0.42, 0.44, '#888', 8, '9 3');
run(0.1, 1, 0.48, '#111', 1);
run(0.1, 0.95, 0.52, '#555', 1);
run(0.3, 0.95, 0.56, BLUE, 4, '12 3');
run(0.1, 0.9, 0.59, '#222', 1);
bundle(0.02, 0.95, 0.61, 0.7, 6, '#111');
run(0.05, 0.3, 0.66, '#888', 6, '6 3');
run(0.1, 0.95, 0.71, BLUE, 4, '19 2');
run(0.45, 0.9, 0.75, GREEN, 5, '8 3');
run(0.03, 0.25, 0.75, GREEN, 3, '8 5');
run(0, 0.92, 0.84, BLUE, 16);
run(0, 0.93, 0.94, BLUE, 5, '19 2');
bundle(0.02, 0.95, 0.78, 0.96, 6, '#000');
run(0, 1, 0.99, '#000', 2);
run(0.15, 1, 1.04, '#fff', 3);
run(0.1, 1, 1.08, '#000', 2);

// cross racks
[0.98, 0.94, 0.9, 0.86].forEach((a, i) => rack(a, 0.1, 1, '#000', i === 0 ? 3 : 2));
rack(1.02, 0, 1.02, '#000', 2);
rack(0.96, 0.15, 0.9, GREEN, 4, '5 7');
rack(0.92, 0.2, 0.95, '#222', 3, '6 3');
rack(0.88, 0.3, 0.95, BLUE, 3, '12 5');
rack(0.68, 0.2, 1, '#000', 2);
rack(0.64, 0.25, 1, BLUE, 1);
rack(0.4, 0.2, 1, BLUE, 1, '3 2');
rack(0.42, 0.55, 1.05, '#000', 2);
rack(0.1, 0.1, 0.9, BLUE, 2);
rack(0.02, 0, 0.9, BLUE, 4);
rack(0.06, 0, 0.85, '#000', 1);
rack(-0.02, 0, 0.9, '#000', 3);
rack(-0.07, 0, 0.8, '#222', 1);
line(195, 222, 262, 260, '#000', 5);
line(178, 222, 224, 248, '#333', 1);
line(224, 248, 243, 236, '#333', 1);
line(240, 236, 259, 246, '#444', 2, '1 1');
line(208, 237, 240, 253, BLUE, 1, '2 1');
line(236, 260, 330, 308, BLUE, 1, '3 1');
line(258, 258, 326, 294, '#000', 3);

// lower block
const low = (x, y, n, color, w, dash) => line(x, y, x + n, y - n, color, w, dash);
low(326, 310, 66, BLUE, 10, '28 1');
low(332, 315, 60, '#222', 2, '9 1');
low(335, 318, 58, '#000', 1);
low(337, 322, 51, '#f0873a', 4);
low(343, 321, 52, '#222', 2, '8 1');
low(347, 323, 52, '#000', 1);
low(351, 324, 52, BLUE, 6, '18 2');
low(360, 318, 34, GREEN, 4, '8 2');
low(356, 326, 52, '#000', 2);
low(358, 330, 54, '#222', 2, '6 2');
low(361, 332, 54, '#555', 2, '4 2');
low(366, 330, 46, BLUE, 3, '8 3');
low(363, 337, 50, '#333', 2, '9 2');
low(396, 310, 27, BLUE, 8, '16 1');
low(404, 319, 20, '#777', 6, '5 2');
low(352, 332, 12, '#777', 4);
for (let i = 0; i < 9; i++) {
    line(332 + i * 8, 312 - i * 7, 366 + i * 7, 331 - i * 6, '#222', 1, '3 2');
}
line(355, 342, 365, 349, '#222', 1);
line(365, 349, 387, 328, '#222', 1);

// north arm and its droppers
line(368, 128, 428, 69, BLUE, 3);
line(366, 127, 440, 165, '#000', 2);
for (let i = 0; i < 8; i++) {
    const x = 373 + i * 7;
    line(x, 127 - i * 7, x, 116 - i * 7, '#000', 1);
}
[[384, 124, 15], [390, 127, 16], [395, 134, 12], [399, 137, 12], [453, 165, 14], [457, 167, 13], [251, 256, 15], [256, 258, 18], [262, 258, 16], [270, 276, 12], [286, 244, 13], [322, 296, 14], [328, 298, 15], [333, 300, 14]]
    .forEach(([x, y, h]) => line(x, y, x, y + h, BLUE, 3));

// east boundary
line(475, 191, 511, 211, '#000', 2);
line(511, 211, 511, 217, '#000', 1);
line(484, 195, 484, 189, '#000', 1);
[[461, 207, 561, 266], [420, 236, 528, 299], [400, 272, 497, 332], [370, 311, 463, 365], [346, 315, 447, 382], [528, 299, 447, 382]]
    .forEach((l) => line(...l, '#3232ff', 1, '3 1'));
line(418, 272, 432, 259, '#555', 1);
[[432, 259], [425, 266], [419, 274]].forEach(([x, y]) => line(x, y, x + 12, y + 8, '#333', 1, '2 1'));

// risers along the edges
for (let i = 0; i < 6; i++) {
    const [x, y] = pt(0.13 + i * 0.135, -0.04);
    line(x, y + 3, x, y - 6, '#000', 1);
}
for (let i = 0; i < 24; i++) {
    const [x, y] = pt(1.02, i / 24);
    line(x, y, x, y - 3 - rnd() * 4, '#000', 1);
}

// fittings and hangers scattered over the racks
for (let i = 0; i < 520; i++) {
    const b = 0.08 + rnd() * 0.9;
    if (b > 0.44 && b < 0.6 && rnd() < 0.7) continue;
    const [x, y] = pt(0.02 + rnd() * 0.95, b);
    const n = 1 + rnd() * 4;
    if (i % 3) line(x, y, x, y - n, '#000', 1);
    else line(x, y, x + n * 1.8, y + n, ['#000', '#777', BLUE, '#fff'][i % 4], 1);
}
for (let i = 0; i < 130; i++) {
    const t = rnd() * 52;
    const s = rnd() * 32;
    line(334 + t + s, 313 - t + s * 0.55, 334 + t + s, 308 - t + s * 0.55 + rnd() * 3, i % 4 ? '#000' : BLUE, 1);
}

// loose tags below the model
[[244, 275], [262, 285], [279, 295], [297, 307], [314, 316], [332, 327], [348, 336], [367, 349], [385, 358], [387, 328], [405, 338], [437, 305], [421, 322], [309, 311], [292, 301]]
    .forEach(([x, y]) => {
        line(x - 1, y, x + 2, y + 1, '#555', 1);
        line(x, y - 2, x, y + 2, '#333', 1);
        line(x + 2, y - 1, x + 2, y + 2, '#888', 1);
    });
line(246, 274, 284, 294, '#333', 1);
line(270, 285, 284, 291, '#333', 1);
line(284, 291, 280, 296, '#333', 1);
line(490, 212, 493, 213, '#333', 1);
line(542, 243, 544, 241, '#333', 1);

const cube = `
    <ellipse cx="600" cy="125" rx="22" ry="16" stroke="#ccc" stroke-width="7"/>
    <ellipse cx="600" cy="125" rx="22" ry="16" stroke="#f3f3f3" stroke-width="5"/>
    <path d="M588 127l13 8 14-8-12-6z" fill="#bbb"/>
    <path d="M599 99l15 8-13 9-14-6z" fill="#f2f2f2" stroke="#bbb"/>
    <path d="M587 110l14 6v16l-14-6z" fill="#e6e6e6" stroke="#bbb"/>
    <path d="M601 116l13-9-2 15-11 10z" fill="#dadada" stroke="#aaa"/>
    <g fill="#888" font-size="6"><text x="597" y="110">上</text><text x="591" y="123">前</text><text x="604" y="121">右</text>
    <text x="580" y="114">西</text><text x="582" y="140">南</text><text x="616" y="136">东</text></g>`;

const navBar = `
    <rect x="621.500" y="147.500" width="14" height="46" rx="2" fill="#eee" stroke="#c6c6c6"/>
    <circle cx="628.500" cy="160" r="4.500" stroke="#888"/><rect x="626" y="157.500" width="5" height="5" rx="1" stroke="#888"/>
    <path d="M623 170h11" stroke="#bbb"/><path d="M625 173h5v5h-5z" fill="#a3c79b"/><path d="M629 177l3 3" stroke="#666"/>
    <path d="M627 167h3l-1.500 1.500zM627 183h3l-1.500 1.500z" fill="#666"/>
    <circle cx="632.500" cy="150" r="1" stroke="#aaa"/><circle cx="632.500" cy="190.500" r="1" stroke="#aaa"/>`;

const viewButtons = '<path d="M615 75h4M624.500 72.500h3v3h-3zM631 72l3 4M634 72l-3 4" stroke="#444"/>';

byId('model').innerHTML = `<g fill="none" shape-rendering="crispEdges">${out.join('')}</g><g fill="none">${cube}${navBar}${viewButtons}</g>`;

// ---------- Excel ----------

byId('excel-title').innerHTML = icon('disk', 8) + icon('undo', 7) + icon('redo', 7) + '<span>▾</span>';
byId('paste').innerHTML = icon('clip', 13) + '<span>粘贴</span><span>▾</span>';
byId('clip-list').innerHTML = [['cut', '剪切'], ['copy', '复制 ▾'], ['brush', '格式刷']]
    .map(([n, t]) => `<button>${icon(n, 7)}${t}</button>`).join('');
byId('align-icons').innerHTML = ['top', 'middle', 'bottom', 'rotate', 'caret', 'lines', 'lines', 'lines', 'indent', 'indent']
    .map((n) => `<button class="${n === 'middle' ? 'on' : ''}">${icon(n, 7)}</button>`).join('');

// number, system, length, diameter, id
const rows = [
    [8, 'HWS-', 250, 450, 10798807], [7, 'HWR', 450, 450, 10798811], [3, 'HWR-', 290, 450, 10798813],
    [11, 'HWR-', 1940, 1000, 10798823], [4, 'HWR-', 300, 600, 10798829], [13, 'HWS-', 9540, 600, 10798855],
    [13, 'HWS-', 4040, 600, 10798857], [5, 'HWS-', 760, 600, 10798865], [6, 'MCHWR', 4050, 1500, 10798875],
    [12, 'CWR', 7000, 1300, 10798885], [12, 'CWS', 7000, 1400, 10798895], [13, 'MCHWS', 5150, 1500, 10799570],
    [13, 'CWS', 7000, 1400, 10800187], [2, 'LCHWS', 1810, 900, 10800253], [2, 'LCHWS', 6330, 900, 10800382],
    [14, 'MCHWS', 5150, 1500, 10800535], [3, 'HWS-', 1150, 800, 10801036], [9, 'HWR-', 830, 800, 10801773],
    [13, 'HWR-', 2490, 1000, 10802123], [6, 'HWR-', 290, 450, 10802225], [1, 'CWS', 270, 600, 10802517],
    [11, 'CWS', 7000, 900, 10803190], [2, 'LCHWR', 8650, 900, 10803224], [1, 'LCHWR', 2700, 900, 10803312],
    [11, 'CWR', 7000, 800, 10803573], [3, 'CWR', 3100, 1100, 10803798], [2, 'CWR', 400, 1100, 10803882],
    [5, 'CWS', 550, 1200, 10803965], [14, 'CWS', 7000, 1200, 10804155], [10, 'CWR', 7000, 1100, 10804236],
    [5, 'MCHWR', 2700, 1000, 10804413], [10, 'MCHWS', 2130, 600, 10804766], [3, 'MCHWS', 300, 600, 10804823],
    [6, 'MCHWS', 750, 600, 10805053], [7, 'MCHWR', 4150, 600, 10805286], [3, 'MCHW普通管', 200, 300, 10805335],
    [1, 'MCHW普通管', 190, 300, 10805462], [5, 'MCHW普通管', 350, 300, 10806334], [3, 'LCHW普通管', 10390, 300, 10806479]
];

const headRow = ['编号', '管道系统', '管道长度', '管道直径', '标记', '注释', 'ID'];
byId('sheet-rows').innerHTML =
    `<tr><th>1</th>${headRow.map((h) => `<td class="zh">${h}</td>`).join('')}<td></td></tr>` +
    rows.map(([n, sys, len, dn, id], i) =>
        `<tr><th>${i + 2}</th><td class="num">${n}</td><td class="clip">${sys}</td><td>L=${len}</td><td class="clip">DN${dn} mm</td><td class="zh">完成</td><td>2020.6.10</td><td>${id}</td><td></td></tr>`).join('');
```
